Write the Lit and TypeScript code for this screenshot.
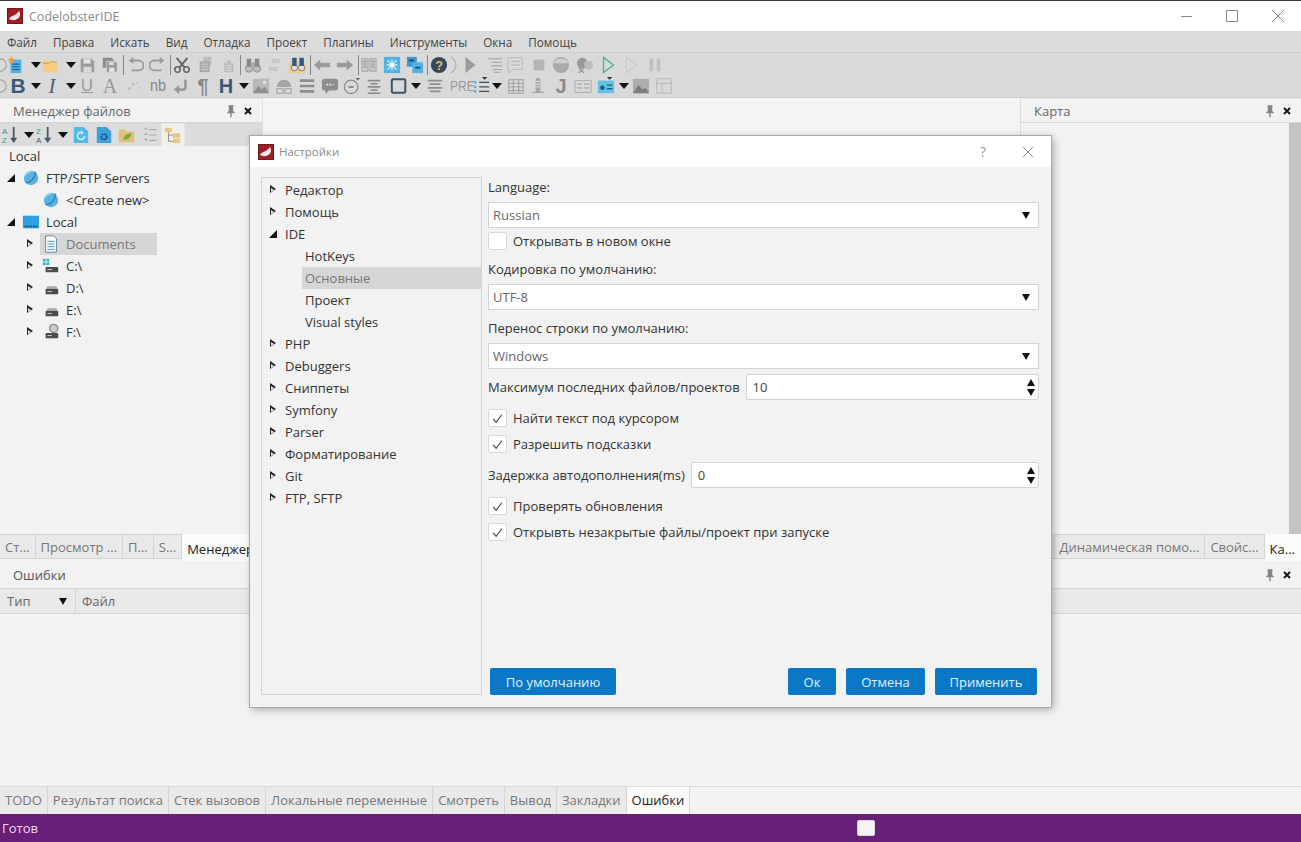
import { LitElement, html, css, svg } from "lit";
import { customElement } from "lit/decorators.js";

const G = "#9b9b9b";
const D = "#777";
const B = "#3fa9de";
const Y = "#f6cd80";

const I: Record<string, any> = {
  ring: svg`<circle cx="10" cy="10" r="7" fill="none" stroke="${G}" stroke-width="1.2"/>`,
  docstar: svg`<rect x="5" y="4" width="12" height="15" fill="#4fb3e4"/><path d="M7 9h8M7 12h8M7 15h8" stroke="#17618f" stroke-width="1.2"/><path d="M6 0l1.3 3 3 .5-2.3 2 .6 3L6 7 3.4 8.5l.6-3-2.3-2 3-.5z" fill="#ef9a3c"/>`,
  folder: svg`<path d="M2 5h6l2 2h8v11H2z" fill="${Y}"/><path d="M2 8h7l2-1.500h7" fill="none" stroke="#c99a46" stroke-width="1"/>`,
  save: svg`<path d="M3 3h12l3 3v12H3z" fill="${G}"/><rect x="6" y="3.500" width="8" height="5" fill="#e2e2e2"/><rect x="6" y="12" width="9" height="6" fill="#d8d8d8"/>`,
  saveall: svg`<path d="M2 2h10l2 2v9H2z" fill="#8d8d8d"/><path d="M6 6h10l2 2v10H6z" fill="${G}" stroke="#d8d8d8" stroke-width=".8"/><rect x="9" y="13" width="6" height="5" fill="#e2e2e2"/><rect x="9" y="7" width="5" height="3" fill="#e2e2e2"/>`,
  undo: svg`<path d="M7 5H14a4 4 0 0 1 0 11H6" fill="none" stroke="${G}" stroke-width="2"/><path d="M8 1L3 5l5 4z" fill="${G}"/>`,
  redo: svg`<path d="M13 5H6a4 4 0 0 0 0 11h8" fill="none" stroke="${G}" stroke-width="2"/><path d="M12 1l5 4-5 4z" fill="${G}"/>`,
  cut: svg`<circle cx="5" cy="15" r="3" fill="none" stroke="#666" stroke-width="1.800"/><circle cx="15" cy="15" r="3" fill="none" stroke="#666" stroke-width="1.800"/><path d="M7 13L16 2M13 13L4 2" stroke="#666" stroke-width="2.200"/>`,
  copy: svg`<rect x="7" y="1" width="9" height="10" fill="#bcbcbc"/><rect x="3" y="6" width="11" height="12" fill="#a8a8a8"/><path d="M5 9h7M5 12h7M5 15h7" stroke="#d8d8d8"/>`,
  paste: svg`<rect x="6" y="8" width="10" height="10" fill="#bbb"/><path d="M8 11h6M8 13.500h6M8 16h6" stroke="#e2e2e2"/><rect x="9" y="5" width="4" height="3" fill="#bbb"/>`,
  binoc: svg`<circle cx="5.500" cy="14" r="4" fill="#bdbdbd" stroke="#888"/><circle cx="14.500" cy="14" r="4" fill="#bdbdbd" stroke="#888"/><rect x="3" y="3" width="5" height="9" fill="#888"/><rect x="12" y="3" width="5" height="9" fill="#888"/><rect x="8" y="7" width="4" height="4" fill="#aaa"/>`,
  onloc: svg`<text x="6" y="8" font-size="8" fill="#aaa" font-family="Liberation Sans">on</text><text x="3" y="17" font-size="8" fill="#aaa" font-family="Liberation Sans">loc</text>`,
  binoc2: svg`<rect x="0" y="7" width="19" height="12" fill="${Y}"/><circle cx="6" cy="13" r="3.500" fill="#dcdcdc" stroke="#777"/><circle cx="14" cy="13" r="3.500" fill="#dcdcdc" stroke="#777"/><rect x="3.500" y="2" width="5" height="9" fill="#35587e"/><rect x="11.500" y="2" width="5" height="9" fill="#35587e"/>`,
  left: svg`<path d="M1 10l7-6v3.500h11v5H8V16z" fill="${G}"/>`,
  right: svg`<path d="M19 10l-7-6v3.500H1v5h11V16z" fill="${G}"/>`,
  book: svg`<path d="M2 3h7v14H2zM11 3h7v14h-7z" fill="#c8c8c8" stroke="#999" stroke-width=".8"/><path d="M3.500 6h4M3.500 9h4M3.500 12h4M12.500 6h4M12.500 9h4M12.500 12h4" stroke="#8a8a8a"/>`,
  net: svg`<rect x="1" y="1" width="18" height="18" fill="#52b3e2"/><path d="M10 4v12M4 10h12M5 5l10 10M15 5L5 15" stroke="#cfeefb" stroke-width="1.400"/><circle cx="10" cy="10" r="2.500" fill="#fff"/>`,
  copyb: svg`<rect x="1" y="1" width="11" height="11" fill="#3d9bd2"/><rect x="7" y="7" width="12" height="12" fill="#52b3e2"/><path d="M3 5h6M10 13h6" stroke="#17507a" stroke-width="2"/>`,
  help: svg`<circle cx="10" cy="10" r="9" fill="#35495e"/><text x="10" y="15" text-anchor="middle" font-size="14" font-weight="700" fill="#e8c15a" font-family="Liberation Sans">?</text>`,
  paren: svg`<path d="M5 1c7 4 9 13 0 18" fill="none" stroke="#aaa" stroke-width="1.200"/>`,
  play: svg`<path d="M5 1l11 9-11 9z" fill="${G}"/>`,
  list: svg`<path d="M2 3h16M6 7h12M6 11h12M8 15h10M8 18h8" stroke="#a5a5a5" stroke-width="1.200"/>`,
  comment: svg`<path d="M2 2h16v13H7l-4 4v-4H2z" fill="none" stroke="#bbb" stroke-width="1.100"/><path d="M6 6h9M6 10h9" stroke="#aaa"/>`,
  stop: svg`<rect x="4" y="4" width="12" height="12" rx="1.500" fill="#b5b5b5"/>`,
  sphere: svg`<circle cx="10" cy="10" r="9" fill="#ababab"/><path d="M2 8a8 5 0 0 1 16 0" fill="#cfcfcf"/>`,
  bubbles: svg`<circle cx="7" cy="8" r="6" fill="#999"/><circle cx="14" cy="10" r="5" fill="#bdbdbd"/><path d="M3 13l6 6M9 13l-6 6" stroke="#999" stroke-width="1.500"/>`,
  playg: svg`<path d="M5 1.500l11 8.500-11 8.500z" fill="none" stroke="#4eb38a" stroke-width="1.500"/>`,
  playo: svg`<path d="M5 1.500l11 8.500-11 8.500z" fill="none" stroke="#c5c5c5" stroke-width="1.200"/>`,
  pause: svg`<rect x="4" y="3" width="4" height="14" fill="#c0c0c0"/><rect x="12" y="3" width="4" height="14" fill="#c0c0c0"/>`,
  dots: svg`<circle cx="5" cy="13" r="1.600" fill="#bbb"/><circle cx="9" cy="8" r="1.600" fill="#bbb"/><circle cx="14" cy="7" r="1.600" fill="#ccc"/><circle cx="16" cy="12" r="1.600" fill="#ccc"/>`,
  ret: svg`<path d="M15 3v8a3 3 0 0 1-3 3H7" fill="none" stroke="${G}" stroke-width="3"/><path d="M8 9l-6 5 6 5z" fill="${G}"/>`,
  image: svg`<rect x="1" y="2" width="18" height="16" fill="#b8b8b8"/><path d="M1 18l6-8 4 4 3-3 5 7z" fill="#8e8e8e"/><circle cx="14" cy="6" r="2" fill="#e0e0e0"/>`,
  dome: svg`<path d="M2 11a8 8 0 0 1 16 0z" fill="#a5a5a5"/><rect x="2" y="13" width="7" height="5" fill="none" stroke="#999"/><rect x="11" y="13" width="7" height="5" fill="none" stroke="#999"/>`,
  bars: svg`<path d="M2 4h16M2 10h16M2 16h16" stroke="#8e8e8e" stroke-width="3"/>`,
  bubble: svg`<path d="M4 2h12a3 3 0 0 1 3 3v7a3 3 0 0 1-3 3H9l-4 4v-4H4a3 3 0 0 1-3-3V5a3 3 0 0 1 3-3z" fill="#8e8e8e"/><path d="M6 8.500h8" stroke="#e5e5e5" stroke-width="2" stroke-dasharray="2 1.500"/>`,
  quote: svg`<circle cx="9" cy="11" r="7.500" fill="none" stroke="#888" stroke-width="1.300"/><path d="M6 11h6" stroke="#888" stroke-width="2"/><path d="M14 1h5l-2.500 3z" fill="#666"/>`,
  lines: svg`<path d="M3 4h14M6 7.500h8M3 11h14M6 14.500h8M3 18h14" stroke="#8a8a8a" stroke-width="1.800"/>`,
  square: svg`<rect x="2" y="2.500" width="15" height="15" rx="1.500" fill="none" stroke="#3b5268" stroke-width="2.200"/>`,
  lines2: svg`<path d="M2 4h16M4 8h12M2 12h16M4 16h12" stroke="#8f8f8f" stroke-width="2"/>`,
  olist: svg`<path d="M8 6h11M8 11h11M8 16h11" stroke="#44505c" stroke-width="1.300"/><circle cx="3.500" cy="6" r="1.500" fill="#4fb3e4"/><circle cx="3.500" cy="11" r="1.500" fill="#4fb3e4"/><circle cx="3.500" cy="16" r="1.500" fill="#4fb3e4"/><path d="M11 0h6l-3 3z" fill="#333"/>`,
  table: svg`<path d="M2 3h16v15H2zM2 7h16M2 11h16M2 15h16M7 3v15M13 3v15" fill="none" stroke="#999" stroke-width="1"/>`,
  llist: svg`<path d="M8 2h4v14H8zM3 17h14" fill="#aaa" stroke="#999"/><path d="M8 5h4M8 8h4M8 11h4" stroke="#eee"/>`,
  form: svg`<rect x="1" y="4" width="18" height="13" fill="none" stroke="#aaa"/><path d="M3 8h6M11 8h6M3 12h6M11 12h6" stroke="#aaa" stroke-width="1.300"/>`,
  formb: svg`<rect x="1" y="4" width="18" height="14" fill="#63c1e6"/><circle cx="6" cy="12" r="2.500" fill="#17607f"/><path d="M11 9h6M11 13h6" stroke="#17607f" stroke-width="1.500"/><path d="M11 0h6l-3 3z" fill="#333"/>`,
  image2: svg`<rect x="1" y="2" width="18" height="16" fill="#aeaeae"/><path d="M1 18l6-9 5 5 3-2 4 6z" fill="#7d7d7d"/>`,
  layout: svg`<path d="M2 2h16v16H2zM2 7h16M8 7v11" fill="none" stroke="#bbb" stroke-width="1.200"/>`,
  az: svg`<text x="0" y="9" font-size="9" fill="#4a7a9a" font-family="Liberation Sans">A</text><text x="0" y="19" font-size="9" fill="#2fa58a" font-family="Liberation Sans">Z</text><path d="M13 1v15" stroke="#46596c" stroke-width="2"/><path d="M9 13h8l-4 6z" fill="#46596c"/>`,
  za: svg`<text x="0" y="9" font-size="9" fill="#2fa58a" font-family="Liberation Sans">Z</text><text x="0" y="19" font-size="9" fill="#4a5a6a" font-family="Liberation Sans">A</text><path d="M13 1v15" stroke="#46596c" stroke-width="2"/><path d="M9 13h8l-4 6z" fill="#46596c"/>`,
  refresh: svg`<path d="M2 1h11l5 5v13H2z" fill="#55b8ea"/><path d="M14 11a4 4 0 1 1-2-3.500" fill="none" stroke="#d8f2fc" stroke-width="1.600"/><path d="M10 5l3 2.500-3 2z" fill="#d8f2fc"/>`,
  gear: svg`<path d="M2 1h11l5 5v13H2z" fill="#3d9fdc"/><circle cx="10" cy="12" r="3" fill="none" stroke="#123f63" stroke-width="1.600" stroke-dasharray="2 .8"/>`,
  ffolder: svg`<path d="M1 4h6l2 2h9v12H1z" fill="#e3c073"/><path d="M6 15c0-5 5-7 9-7-1 5-4 8-9 7z" fill="#7fa84f"/>`,
  chk: svg`<path d="M4 3h3M4 9h3M4 15h3" stroke="#aaa" stroke-width="2"/><path d="M9 4h8M9 10h8M9 16h8" stroke="#aaa" stroke-width="1.200"/>`,
  fold: svg`<rect x="1" y="2" width="8" height="5" fill="#e9c884"/><rect x="10" y="8" width="8" height="5" fill="#e9c884"/><rect x="10" y="14" width="8" height="5" fill="#e9c884"/><path d="M5 7v10h5M5 10h5" fill="none" stroke="#888"/>`,
  globe: svg`<circle cx="10" cy="10" r="8" fill="#58b3e2"/><path d="M4 15C9 16 15 10 15 3" fill="none" stroke="#2f80b4" stroke-width="1.500"/><path d="M3 8c1-3 4-5 7-5" fill="none" stroke="#a9def5" stroke-width="1.500"/>`,
  monitor: svg`<rect x="1" y="3" width="18" height="14" fill="#2f9fe0"/><path d="M3 15h14" stroke="#0d4a73" stroke-width="1.500" stroke-dasharray="2 1"/>`,
  note: svg`<path d="M4 1h9l3 3v15H4z" fill="#fff" stroke="#55809f"/><path d="M6 7h8M6 10h8M6 13h8M6 16h8" stroke="#2d8ac0"/>`,
  cdrive: svg`<rect x="1" y="2" width="3" height="3" fill="#2fb4d8"/><rect x="5" y="2" width="3" height="3" fill="#2fb4d8"/><rect x="1" y="6" width="3" height="3" fill="#2fb4d8"/><rect x="5" y="6" width="3" height="3" fill="#2fb4d8"/><rect x="4" y="11" width="14" height="6" rx="1" fill="#4b4b4b"/><path d="M6 14h5" stroke="#ddd"/>`,
  drive: svg`<path d="M6 8h10l2 4H4z" fill="#aaa"/><rect x="4" y="11" width="14" height="6" rx="1" fill="#4b4b4b"/><path d="M6 14h5" stroke="#ddd"/>`,
  fdrive: svg`<circle cx="13" cy="6" r="4.500" fill="#ccc" stroke="#888" stroke-width="1.500"/><rect x="4" y="11" width="14" height="6" rx="1" fill="#4b4b4b"/><path d="M6 14h5" stroke="#ddd"/>`,
  pin: svg`<path d="M5 2h6M6 2v6l-2 2h8l-2-2V2" fill="#808080" stroke="#808080"/><path d="M8 10v5" stroke="#808080" stroke-width="1.500"/>`,
  x: svg`<path d="M4 4l8 8M12 4l-8 8" stroke="#111" stroke-width="2.400"/>`,
  logo: svg`<rect x=".5" y=".5" width="15" height="15" fill="#9f1d22" stroke="#6d1a1c"/><path d="M2 11c2-4 7-3 10-8 2 3 1 7-2 8-3 2-6 1-8 0z" fill="#f5e9e9"/>`,
  tick: svg`<path d="M3.500 8.500l3 3.500 6-8" fill="none" stroke="#444" stroke-width="1.200"/>`,
};

type TbItem = [string, number];
const R1: TbItem[] = [["ring",0],["docstar",15],["^",36],["folder",50],["^",71],["save",87],["saveall",110],["|",123],["undo",135],["redo",158],["|",170],["cut",182],["copy",206],["paste",228],["|",240],["binoc",253],["onloc",275],["binoc2",298],["|",310],["left",322],["right",345],["|",358],["book",369],["net",392],["copyb",415],["|",427],["help",439],["paren",455],["play",470],["list",495],["comment",515],["stop",539],["sphere",561],["bubbles",585],["playg",608],["playo",631],["pause",655]];
const R2: TbItem[] = [["ring",0],["T:B:tb",18],["^",36],["T:I:ti",52],["^",71],["T:U:tu",87],["T:A:ta",110],["dots",134],["T:nb:tn",158],["ret",181],["T:¶:tp",203],["T:H:th",226],["^",244],["image",261],["dome",284],["bars",307],["bubble",330],["quote",352],["lines",374],["square",399],["^",416],["lines2",435],["T:PRE:tr",458],["olist",481],["^",497],["table",516],["llist",538],["T:J:tj",561],["form",583],["formb",606],["^",624],["image2",641],["layout",664]];
const R3: TbItem[] = [["az",11],["^",29],["za",45],["^",63],["refresh",81],["gear",104],["ffolder",127],["chk",150],["fold",173]];

const widthOf = (n: string) => (n === "^" ? 10 : n === "|" ? 1 : 20);

function toolbar(items: TbItem[]) {
  let right = 0;
  return items.map(([n, c]) => {
    const w = widthOf(n);
    const m = c - w / 2 - right;
    right = c - w / 2 + w;
    const st = `margin-left:${m}px`;
    if (n === "^") return html`<span class="caret" style=${st}></span>`;
    if (n === "|") return html`<span class="tsep" style=${st}></span>`;
    if (n.startsWith("T:")) {
      const [, t, k] = n.split(":");
      return html`<span class="tic ${k}" style=${st}>${t}</span>`;
    }
    const act = n === "fold" ? "act" : "";
    return html`<span class="ic ${act}" style=${st}><svg viewBox="0 0 20 20">${I[n]}</svg></span>`;
  });
}

const ico = (n: string, cls = "i16") => html`<svg class=${cls} viewBox="0 0 ${n === "pin" || n === "x" || n === "logo" || n === "tick" ? 16 : 20} ${n === "pin" || n === "x" || n === "logo" || n === "tick" ? 16 : 20}">${I[n]}</svg>`;

const arrow = (a: string) => a === "o"
  ? html`<span class="arr open"></span>`
  : a === "c" ? html`<span class="arr closed"></span>` : html`<span class="arr"></span>`;

const fileTree: [number, string, string, string, string?][] = [
  [0, "o", "globe", "FTP/SFTP Servers"],
  [1, "", "globe", "<Create new>"],
  [0, "o", "monitor", "Local"],
  [1, "c", "note", "Documents", "sel"],
  [1, "c", "cdrive", "C:\\"],
  [1, "c", "drive", "D:\\"],
  [1, "c", "drive", "E:\\"],
  [1, "c", "fdrive", "F:\\"],
];

const setTree: [number, string, string, string?][] = [
  [0, "c", "Редактор"], [0, "c", "Помощь"], [0, "o", "IDE"],
  [1, "", "HotKeys"], [1, "", "Основные", "sel"], [1, "", "Проект"], [1, "", "Visual styles"],
  [0, "c", "PHP"], [0, "c", "Debuggers"], [0, "c", "Сниппеты"], [0, "c", "Symfony"],
  [0, "c", "Parser"], [0, "c", "Форматирование"], [0, "c", "Git"], [0, "c", "FTP, SFTP"],
];

@customElement("app-root")
export class AppRoot extends LitElement {
  static styles = css`
    :host { display: flex; flex-direction: column; width: 1301px; height: 842px; position: relative; overflow: hidden;
      background: #f2f2f2; font-family: "Open Sans", "Noto Sans", sans-serif; font-size: 13px; color: #333; }
    .title { height: 30px; border-top: 1px solid #3a3a3a; background: #fff; display: flex; align-items: center; padding-left: 7px; flex: none; }
    .title .name { margin-left: 6px; font-size: 12.500px; color: #8a8a8a; flex: 1; }
    .wc { display: flex; margin-right: 0; }
    .wc span { width: 46px; display: flex; justify-content: center; align-items: center; }
    .wmin { width: 11px; height: 1px; background: #888; display: block; }
    .wmax { width: 10px; height: 10px; border: 1px solid #8a8a8a; display: block; }
    .i16 { width: 16px; height: 16px; display: block; flex: none; }
    .menu { height: 21px; flex: none; background: #dcdcdc; display: flex; align-items: center; padding-left: 7px; gap: 16px; font-size: 11.700px; color: #444; }
    .tools { height: 46px; flex: none; background: #d9d9d9; border-top: 1px solid #cfcfcf; box-sizing: border-box; display: flex; flex-direction: column; padding-top: 1px; border-bottom: 1px solid #cdcdcd; }
    .trow { display: flex; align-items: center; height: 22px; }
    .ic { width: 20px; height: 20px; display: block; flex: none; }
    .ic svg { width: 18px; height: 18px; margin: 1px; display: block; }
    .ic.act { background: #f0efea; box-shadow: 0 0 0 1.500px #f0efea; }
    .caret { width: 0; height: 0; box-sizing: content-box; flex: none; border-left: 5px solid transparent; border-right: 5px solid transparent; border-top: 6px solid #111; display: block; }
    .tsep { width: 1px; height: 20px; background: #888; flex: none; display: block; }
    .tic { width: 20px; height: 20px; flex: none; text-align: center; line-height: 20px; display: block; color: #8c8c8c; overflow: visible; white-space: nowrap; }
    .tb { font: 700 21px "Liberation Sans", sans-serif; color: #3c5a78; line-height: 20px; }
    .ti { font: italic 21px "Liberation Serif", serif; color: #4d6377; line-height: 20px; }
    .tu { font: 17px "Liberation Sans", sans-serif; text-decoration: underline; color: #999; line-height: 20px; }
    .ta { font: 20px "Liberation Serif", serif; color: #999; line-height: 20px; }
    .tn { font: 17px "Liberation Sans", sans-serif; transform: scaleX(.85); color: #888; line-height: 20px; }
    .tp { font: 700 20px "Liberation Sans", sans-serif; color: #888; line-height: 20px; }
    .th { font: 700 20px "Liberation Sans", sans-serif; color: #3c5a78; line-height: 20px; }
    .tr { font: 15px "Liberation Sans", sans-serif; transform: scaleX(.8); color: #999; line-height: 20px; }
    .tj { font: 700 20px "Liberation Sans", sans-serif; color: #8a8a8a; line-height: 20px; }

    .dock { flex: 1; display: flex; min-height: 0; }
    .left { width: 262px; flex: none; display: flex; flex-direction: column; border-right: 1px solid #e2e2e2; box-sizing: content-box; }
    .center { flex: 1; background: #f4f4f4; border-right: 1px solid #dcdcdc; }
    .right { width: 280px; flex: none; display: flex; flex-direction: column; }
    .phead { height: 25px; flex: none; display: flex; align-items: center; padding-left: 13px; box-sizing: border-box; border-bottom: 1px solid #d6d6d6; border-top: 1px solid #e8e8e8; color: #666; }
    .phead .t { flex: 1; }
    .phead .pin { width: 14px; height: 14px; margin-right: 1px; }
    .phead .xx { width: 12px; height: 12px; margin-right: 8px; margin-left: 3px; }
    .ftool { height: 23px; flex: none; background: #dcdcdc; display: flex; align-items: center; }
    .tree-top { padding: 1px 0 0 9px; height: 20px; flex: none; line-height: 18px; }
    .row { height: 22px; display: flex; align-items: center; white-space: nowrap; }
    .arr { width: 12px; height: 12px; flex: none; position: relative; display: block; }
    .arr.open::before { content: ""; position: absolute; right: 2px; bottom: 2px; border-style: solid; border-width: 0 0 8px 8px; border-color: transparent transparent #111 transparent; }
    .arr.closed::before { content: ""; position: absolute; left: 3px; top: 1px; border-style: solid; border-width: 4.500px 0 4.500px 6px; border-color: transparent transparent transparent #222; }
    .arr.closed::after { content: ""; position: absolute; left: 4px; top: 3.500px; border-style: solid; border-width: 2.500px 0 2.500px 3px; border-color: transparent transparent transparent #eee; }
    .ftree .r0 { padding-left: 5px; }
    .ftree .r1 { padding-left: 24px; }
    .ftree .i { width: 18px; height: 18px; margin: 0 6px 0 6px; flex: none; display: block; }
    .ftree .r0 .i { margin-left: 5px; }
    .ftree .sel { width: 157px; box-sizing: border-box; background: linear-gradient(to right, transparent 40px, #d6d6d6 40px); color: #777; }
    .rpane { flex: 1; display: flex; justify-content: flex-end; }
    .scroll { width: 12px; background: #c4c4c4; }
    .tabbar { height: 27px; flex: none; display: flex; justify-content: space-between; background: #f2f2f2; }
    .tabs { display: flex; height: 100%; }
    .tab { height: 25px; box-sizing: border-box; padding: 0 5px; line-height: 24px; background: #e9e9e9; border: 1px solid #d4d4d4; border-left: 0; color: #777; white-space: nowrap; }
    .tab.on { background: #fbfbfb; height: 27px; color: #222; border-color: transparent; line-height: 28px; }
    .lower { height: 225px; flex: none; display: flex; flex-direction: column; }
    .lhead { height: 27px; flex: none; display: flex; align-items: center; padding-left: 13px; color: #555; }
    .lhead .t { flex: 1; }
    .lhead .pin { width: 14px; height: 14px; margin-right: 1px; }
    .lhead .xx { width: 12px; height: 12px; margin-right: 8px; margin-left: 3px; }
    .thead { height: 26px; flex: none; box-sizing: border-box; background: #e9e9e9; border: 1px solid #d6d6d6; border-left: 0; border-right: 0; display: flex; align-items: center; color: #666; }
    .thead .c1 { width: 76px; box-sizing: border-box; height: 100%; padding: 0 8px 0 7px; display: flex; align-items: center; justify-content: space-between; border-right: 1px solid #d6d6d6; }
    .thead .c2 { padding-left: 6px; }
    .cdown { border-left: 4.500px solid transparent; border-right: 4.500px solid transparent; border-top: 7px solid #111; width: 0; height: 0; display: block; flex: none; }
    .btabs { height: 28px; flex: none; display: flex; border-top: 1px solid #dcdcdc; box-sizing: border-box; }
    .btabs .tab { height: 27px; line-height: 27px; border-top: 0; border-bottom: 0; }
    .btabs .tab.on { background: #fafafa; border-right: 1px solid #d4d4d4; }
    .status { height: 28px; flex: none; background: #66207a; color: #ecdcee; display: flex; align-items: center; padding-left: 2px; position: relative; }
    .status .box { position: absolute; left: 857px; top: 6px; width: 18px; height: 16px; background: #f6f3f7; border-radius: 2px; }

    .dlg { position: absolute; left: 250px; top: 136px; width: 801px; height: 571px; background: #f2f2f2; display: flex; flex-direction: column; box-shadow: 0 0 0 1px #aaa, 2px 2px 8px rgba(0,0,0,.35); }
    .dtitle { height: 31px; flex: none; background: #fff; display: flex; align-items: center; padding-left: 8px; color: #8a8a8a; font-size: 11.500px; }
    .dtitle .nm { margin-left: 5px; flex: 1; }
    .dtitle .q { width: 14px; text-align: center; font-size: 14px; color: #999; margin-right: 31px; }
    .dtitle .cl { margin-right: 16px; width: 14px; height: 14px; }
    .dbody { flex: 1; display: flex; padding: 10px 12px 12px 11px; gap: 6px; min-height: 0; }
    .stree { width: 221px; height: 518px; flex: none; box-sizing: border-box; border: 1px solid #d4d4d4; padding-top: 1px; }
    .stree .r0 { padding-left: 5px; }
    .stree .r0 .arr { margin-right: 6px; }
    .stree .r1 { margin-left: 40px; padding-left: 3px; }
    .stree .sel { background: #d6d6d6; color: #777; }
    .dright { flex: 1; display: flex; flex-direction: column; min-width: 0; }
    .form { flex: 1; display: flex; flex-direction: column; }
    .lab { height: 20px; line-height: 20px; }
    .combo { height: 26px; box-sizing: border-box; background: #fff; border: 1px solid #d4d4d4; display: flex; align-items: center; justify-content: space-between; padding: 0 8px 0 4px; color: #666; }
    .combo .cdown { border-left-width: 4px; border-right-width: 4px; border-top-width: 7px; }
    .chk { display: flex; align-items: center; height: 26px; gap: 6px; }
    .box { width: 19px; height: 18px; box-sizing: border-box; background: #fff; border: 1px solid #d8d8d8; border-radius: 2px; flex: none; display: flex; align-items: center; justify-content: center; }
    .box svg { width: 15px; height: 15px; display: block; }
    .spinrow { display: flex; align-items: center; height: 26px; gap: 6px; }
    .spin { flex: 1; height: 26px; box-sizing: border-box; background: #fff; border: 1px solid #d4d4d4; display: flex; align-items: center; justify-content: space-between; padding: 0 3px 0 6px; color: #444; border-radius: 2px; }
    .arrows { display: flex; flex-direction: column; gap: 3px; }
    .up { width: 0; height: 0; border-left: 4px solid transparent; border-right: 4px solid transparent; border-bottom: 7px solid #111; display: block; }
    .dn { width: 0; height: 0; border-left: 4px solid transparent; border-right: 4px solid transparent; border-top: 7px solid #111; display: block; }
    .mt1 { margin-top: 8px; }
    .gap5 { margin-top: 5px; }
    .btns { display: flex; padding: 0 2px; gap: 10px; height: 27px; flex: none; }
    .btn { height: 27px; box-sizing: border-box; background: #0a78c6; color: #e3f2fb; border-radius: 2px; display: flex; align-items: center; justify-content: center; }
    .b1 { width: 126px; margin-right: auto; }
    .b2 { width: 48px; }
    .b3 { width: 79px; }
    .b4 { width: 102px; }
  `;

  render() {
    const menu = ["Файл", "Правка", "Искать", "Вид", "Отладка", "Проект", "Плагины", "Инструменты", "Окна", "Помощь"];
    const ltabs: [string, boolean?][] = [["Ст..."], ["Просмотр ..."], ["П..."], ["S..."], ["Менеджер", true]];
    const rtabs: [string, boolean?][] = [["..."], ["Динамическая помо..."], ["Свойс..."], ["Ка...", true]];
    const btabs: [string, boolean?][] = [["TODO"], ["Результат поиска"], ["Стек вызовов"], ["Локальные переменные"], ["Смотреть"], ["Вывод"], ["Закладки"], ["Ошибки", true]];
    const tabs = (l: [string, boolean?][]) => l.map(([t, on]) => html`<div class="tab ${on ? "on" : ""}">${t}</div>`);
    const check = (t: string, on = true, cls = "") => html`<div class="chk ${cls}"><span class="box">${on ? ico("tick", "") : ""}</span><span>${t}</span></div>`;
    const combo = (t: string) => html`<div class="combo"><span>${t}</span><span class="cdown"></span></div>`;
    const spin = (l: string, v: string) => html`<div class="spinrow"><span>${l}</span><div class="spin"><span>${v}</span><span class="arrows"><span class="up"></span><span class="dn"></span></span></div></div>`;
    return html`
      <div class="title">${ico("logo")}<span class="name">CodelobsterIDE</span>
        <div class="wc"><span><i class="wmin"></i></span><span><i class="wmax"></i></span><span><svg class="i16" viewBox="0 0 16 16"><path d="M2 2l12 12M14 2L2 14" stroke="#888"/></svg></span></div>
      </div>
      <div class="menu">${menu.map((m) => html`<span>${m}</span>`)}</div>
      <div class="tools">
        <div class="trow">${toolbar(R1)}</div>
        <div class="trow">${toolbar(R2)}</div>
      </div>
      <div class="dock">
        <div class="left">
          <div class="phead"><span class="t">Менеджер файлов</span>${ico("pin", "i16 pin")}${ico("x", "i16 xx")}</div>
          <div class="ftool">${toolbar(R3)}</div>
          <div class="tree-top">Local</div>
          <div class="ftree">
            ${fileTree.map(([d, a, i, t, s]) => html`<div class="row r${d} ${s || ""}">${arrow(a)}${ico(i, "i")}<span>${t}</span></div>`)}
          </div>
        </div>
        <div class="center"></div>
        <div class="right">
          <div class="phead"><span class="t">Карта</span>${ico("pin", "i16 pin")}${ico("x", "i16 xx")}</div>
          <div class="rpane"><div class="scroll"></div></div>
        </div>
      </div>
      <div class="tabbar"><div class="tabs">${tabs(ltabs)}</div><div class="tabs">${tabs(rtabs)}</div></div>
      <div class="lower">
        <div class="lhead"><span class="t">Ошибки</span>${ico("pin", "i16 pin")}${ico("x", "i16 xx")}</div>
        <div class="thead"><div class="c1"><span>Тип</span><span class="cdown"></span></div><div class="c2">Файл</div></div>
      </div>
      <div class="btabs">${tabs(btabs)}</div>
      <div class="status">Готов<span class="box"></span></div>

      <div class="dlg">
        <div class="dtitle">${ico("logo")}<span class="nm">Настройки</span><span class="q">?</span>
          <svg class="cl" viewBox="0 0 14 14"><path d="M2 2l10 10M12 2L2 12" stroke="#888"/></svg></div>
        <div class="dbody">
          <div class="stree">
            ${setTree.map(([d, a, t, s]) => html`<div class="row r${d} ${s || ""}">${d === 0 ? arrow(a) : ""}<span>${t}</span></div>`)}
          </div>
          <div class="dright">
            <div class="form">
              <div class="lab">Language:</div>
              <div class="gap5"></div>
              ${combo("Russian")}
              <div class="chk">${check("Открывать в новом окне", false)}</div>
              <div class="lab gap5">Кодировка по умолчанию:</div>
              <div class="gap5"></div>
              ${combo("UTF-8")}
              <div class="lab mt1">Перенос строки по умолчанию:</div>
              <div class="gap5"></div>
              ${combo("Windows")}
              <div class="gap5"></div>
              ${spin("Максимум последних файлов/проектов", "10")}
              <div class="gap5"></div>
              ${check("Найти текст под курсором")}
              ${check("Разрешить подсказки")}
              <div class="gap5"></div>
              ${spin("Задержка автодополнения(ms)", "0")}
              <div class="gap5"></div>
              ${check("Проверять обновления")}
              ${check("Открывть незакрытые файлы/проект при запуске")}
            </div>
            <div class="btns">
              <div class="btn b1">По умолчанию</div>
              <div class="btn b2">Ок</div>
              <div class="btn b3">Отмена</div>
              <div class="btn b4">Применить</div>
            </div>
          </div>
        </div>
      </div>
    `;
  }
}
